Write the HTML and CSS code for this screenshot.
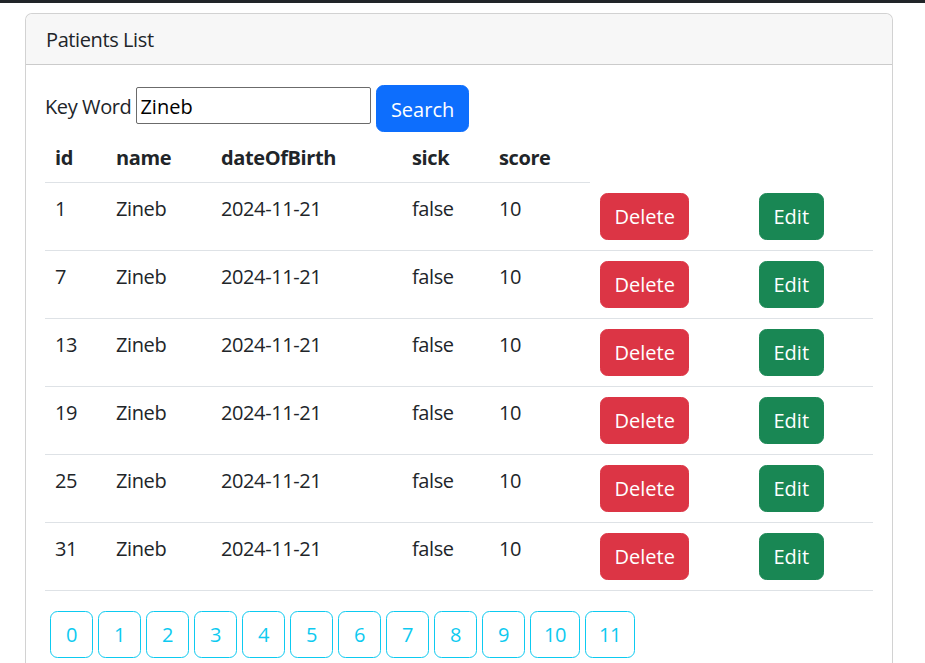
FILE: index.html
```html
<!DOCTYPE html>
<html>
<head>
<meta charset="utf-8">
<link rel="stylesheet" href="styles.css">
</head>
<body>
<div class="topbar"></div>
<div class="page">
  <div class="card">
    <div class="card-header">Patients List</div>
    <div class="card-body">
      <form class="search">
        <label>Key Word</label>
        <input class="kw" type="text" value="Zineb">
        <button type="button" class="btn btn-primary">Search</button>
      </form>
      <table class="table">
        <colgroup>
          <col class="c-id"><col class="c-name"><col class="c-date"><col class="c-sick"><col class="c-score"><col class="c-del"><col class="c-edit">
        </colgroup>
        <thead>
          <tr><th>id</th><th>name</th><th>dateOfBirth</th><th>sick</th><th>score</th></tr>
        </thead>
        <tbody>
          <tr><td>1</td><td>Zineb</td><td>2024-11-21</td><td>false</td><td>10</td><td><button class="btn btn-danger">Delete</button></td><td><button class="btn btn-success">Edit</button></td></tr>
          <tr><td>7</td><td>Zineb</td><td>2024-11-21</td><td>false</td><td>10</td><td><button class="btn btn-danger">Delete</button></td><td><button class="btn btn-success">Edit</button></td></tr>
          <tr><td>13</td><td>Zineb</td><td>2024-11-21</td><td>false</td><td>10</td><td><button class="btn btn-danger">Delete</button></td><td><button class="btn btn-success">Edit</button></td></tr>
          <tr><td>19</td><td>Zineb</td><td>2024-11-21</td><td>false</td><td>10</td><td><button class="btn btn-danger">Delete</button></td><td><button class="btn btn-success">Edit</button></td></tr>
          <tr><td>25</td><td>Zineb</td><td>2024-11-21</td><td>false</td><td>10</td><td><button class="btn btn-danger">Delete</button></td><td><button class="btn btn-success">Edit</button></td></tr>
          <tr><td>31</td><td>Zineb</td><td>2024-11-21</td><td>false</td><td>10</td><td><button class="btn btn-danger">Delete</button></td><td><button class="btn btn-success">Edit</button></td></tr>
        </tbody>
      </table>
      <ul class="pages">
        <li><a class="pg">0</a></li>
        <li><a class="pg">1</a></li>
        <li><a class="pg">2</a></li>
        <li><a class="pg">3</a></li>
        <li><a class="pg">4</a></li>
        <li><a class="pg">5</a></li>
        <li><a class="pg">6</a></li>
        <li><a class="pg">7</a></li>
        <li><a class="pg">8</a></li>
        <li><a class="pg">9</a></li>
        <li><a class="pg">10</a></li>
        <li><a class="pg">11</a></li>
      </ul>
    </div>
  </div>
</div>
</body>
</html>
```
FILE: styles.css
```css
* { box-sizing: border-box; }
html, body { margin: 0; padding: 0; }
body {
  font-family: "Open Sans", "Noto Sans", "Liberation Sans", sans-serif;
  font-size: 20px;
  line-height: 30px;
  letter-spacing: -0.4px;
  color: #212529;
  background: #fff;
}
.topbar { height: 3px; background: #212529; }
.page { padding: 10px 32px 0 25px; }
.card {
  border: 1px solid rgba(0,0,0,.175);
  border-radius: 7px;
  background: #fff;
}
.card-header {
  background: #f7f7f7;
  padding: 11px 20px 9px;
  border-bottom: 1px solid rgba(0,0,0,.175);
  border-radius: 7px 7px 0 0;
  height: 51px;
}
.card-body { padding: 20px 19px; }
.search { display: flex; align-items: flex-start; gap: 5px; margin: 0; }
.search label { line-height: 30px; margin-top: 7px; }
.kw {
  width: 235px; height: 37px;
  margin-top: 2px;
  border: 1px solid #6b6b6b; border-radius: 2px;
  padding: 2px 3px 0;
  font: inherit; color: #000;
}
.btn {
  display: inline-block;
  font: inherit;
  line-height: 30px;
  height: 47px;
  padding: 8.5px 13.5px 6.5px;
  border: 1px solid transparent;
  border-radius: 7.5px;
  color: #fff;
  cursor: pointer;
}
.btn-primary { background: #0d6efd; border-color: #0d6efd; }
.btn-danger { background: #dc3545; border-color: #dc3545; }
.btn-success { background: #198754; border-color: #198754; }
.table { border-collapse: collapse; width: 828px; table-layout: fixed; }
.c-id { width: 61px; } .c-name { width: 105px; } .c-date { width: 191px; }
.c-sick { width: 87px; } .c-score { width: 101px; } .c-del { width: 159px; } .c-edit { width: 124px; }
.table th, .table td {
  padding: 11px 10px 9px;
  text-align: left;
  vertical-align: top;
  border-bottom: 1px solid #dee2e6;
}
.table td:nth-child(n+6) { padding-top: 10px; padding-bottom: 10px; }
.table th { font-weight: 700; }
.pages { list-style: none; margin: 20px 0 0; padding: 0; display: flex; }
.pages li { margin-left: 5px; }
.pg {
  display: block;
  min-width: 43px;
  height: 47px;
  padding: 8.5px 13px 6.5px;
  line-height: 30px;
  text-align: center;
  border: 1px solid #0dcaf0;
  border-radius: 7.5px;
  color: #0dcaf0;
}
```
